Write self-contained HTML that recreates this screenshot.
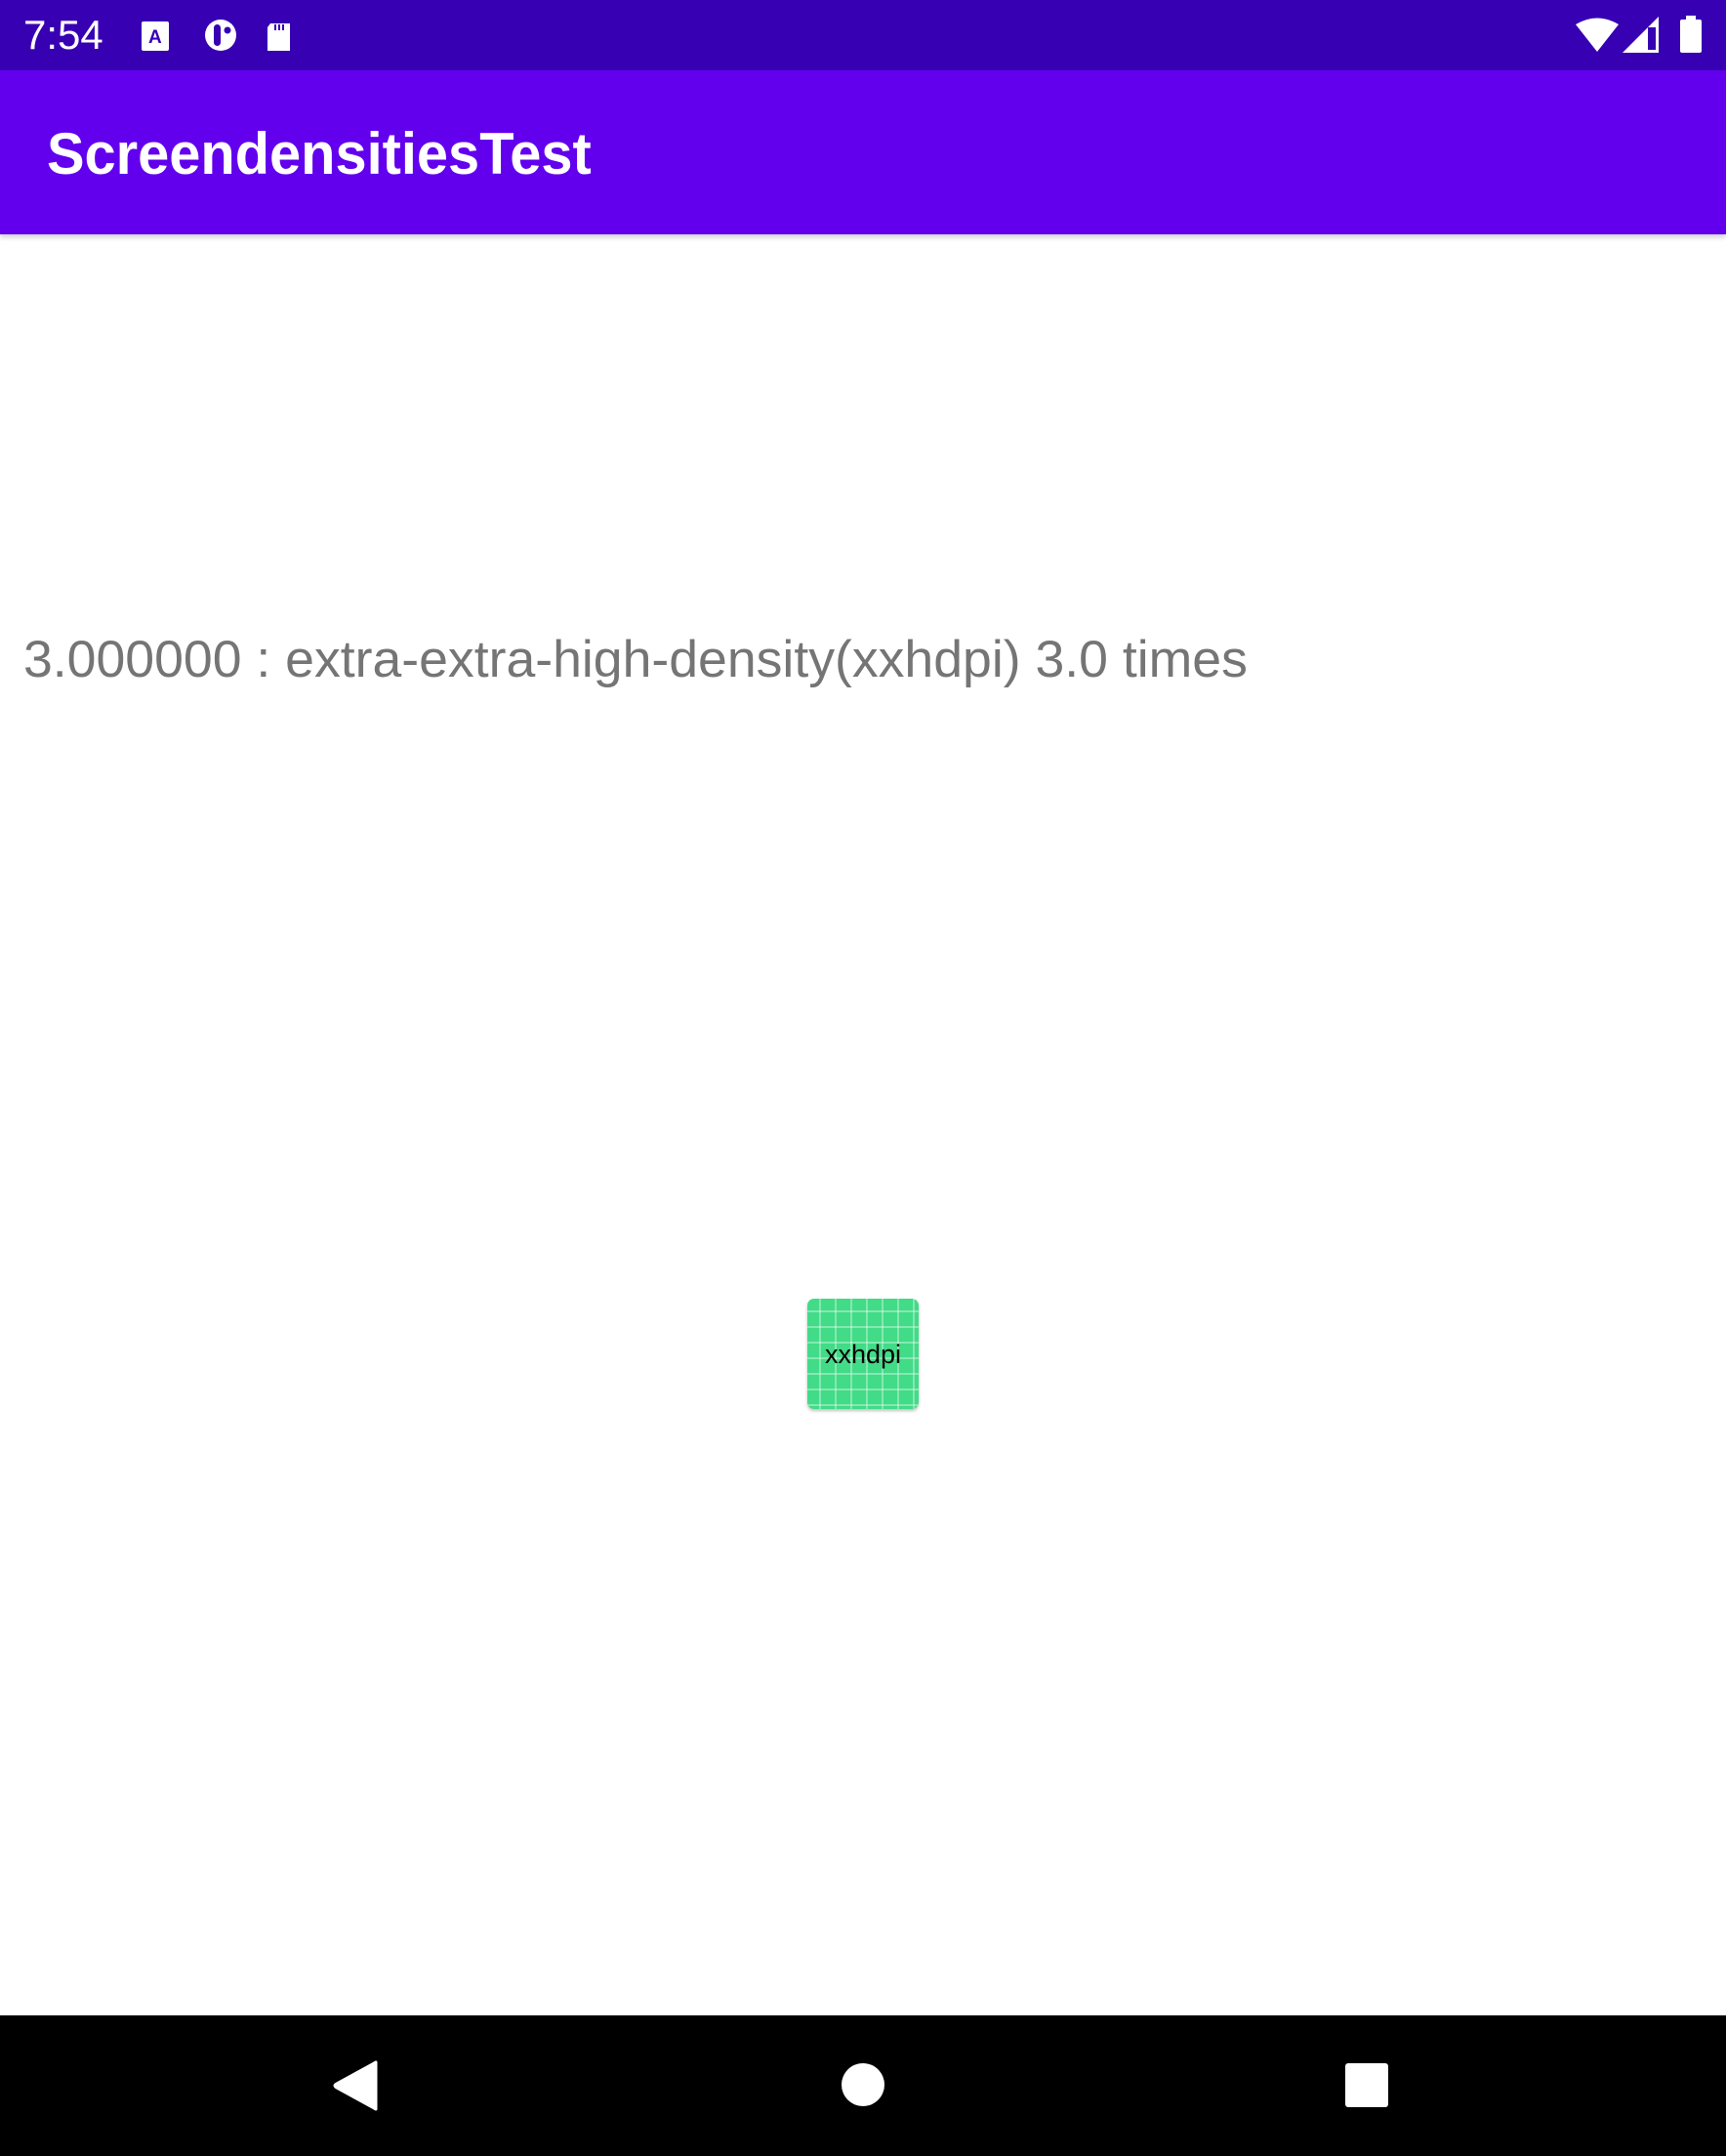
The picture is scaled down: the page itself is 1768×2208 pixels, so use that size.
<!DOCTYPE html>
<html><head><style>
body{margin:0;width:1768px;height:2208px;position:relative;background:#fff;overflow:hidden;font-family:"Liberation Sans",sans-serif}
.sb{position:absolute;left:0;top:0;width:1768px;height:72px;background:#3700b3}
.ab{position:absolute;left:0;top:72px;width:1768px;height:168px;background:#6200ee;box-shadow:0 3px 5px rgba(0,0,0,.18)}
.t{position:absolute;white-space:nowrap;transform-origin:0 0}
.nav{position:absolute;left:0;top:2064px;width:1768px;height:144px;background:#000}
.box{position:absolute;left:827px;top:1330px;width:114px;height:113px;border-radius:7px;background-color:#42db87;
background-image:linear-gradient(90deg,rgba(255,255,255,.35) 2px,transparent 2px),linear-gradient(rgba(255,255,255,.35) 2px,transparent 2px);
background-size:16px 16px;background-position:-4px -4px;box-shadow:0 2px 3px rgba(0,0,0,.25)}
</style></head><body>
<div class="sb"></div>
<div class="t" style="left:24px;top:12px;font-size:42px;color:#fff">7:54</div>
<svg style="position:absolute;left:140px;top:14px" width="180" height="46">
<rect x="5" y="8" width="28" height="30" rx="2" fill="#fff"/>
<text x="12" y="30" font-size="19" font-weight="bold" fill="#3700b3" font-family="Liberation Sans">A</text>
<circle cx="86" cy="22" r="16" fill="#fff"/><rect x="79" y="11" width="7" height="22" rx="3.5" fill="#3700b3"/><circle cx="93" cy="17" r="3.5" fill="#3700b3"/>
<path d="M137 10h20v28h-23v-24z" fill="#fff"/><rect x="141" y="11" width="2" height="6" fill="#3700b3"/><rect x="145" y="11" width="2" height="6" fill="#3700b3"/><rect x="149" y="11" width="2" height="6" fill="#3700b3"/>
</svg>
<svg style="position:absolute;left:1600px;top:14px" width="168" height="46">
<path d="M14 11 Q36 -2 58 11 L36 39Z" fill="#fff"/>
<path d="M62 40 L99 3 V40Z" fill="#fff"/><rect x="88" y="14" width="8" height="23" fill="#3700b3"/>
<rect x="121" y="6" width="22" height="34" rx="2" fill="#fff"/><rect x="127" y="2" width="10" height="5" fill="#fff"/>
</svg>
<div class="ab"></div>
<div class="t" style="left:48px;top:123px;font-size:60px;font-weight:bold;color:#fff;transform:scaleX(.963)">ScreendensitiesTest</div>
<div class="t" style="left:24px;top:645px;font-size:53px;color:#757575;transform:scaleX(1.011)">3.000000 : extra-extra-high-density(xxhdpi) 3.0 times</div>
<div class="box"></div>
<div class="t" style="left:827px;width:114px;text-align:center;top:1372px;font-size:27px;color:#000">xxhdpi</div>
<div class="nav"></div>
<svg style="position:absolute;left:0;top:2064px" width="1768" height="144">
<path d="M385 48 V96 L345 74 Q341 72 345 70Z" fill="#fff" stroke="#fff" stroke-width="3" stroke-linejoin="round"/>
<circle cx="884" cy="71" r="22" fill="#fff"/>
<rect x="1378" y="49" width="44" height="45" rx="3" fill="#fff"/>
</svg>
</body></html>
